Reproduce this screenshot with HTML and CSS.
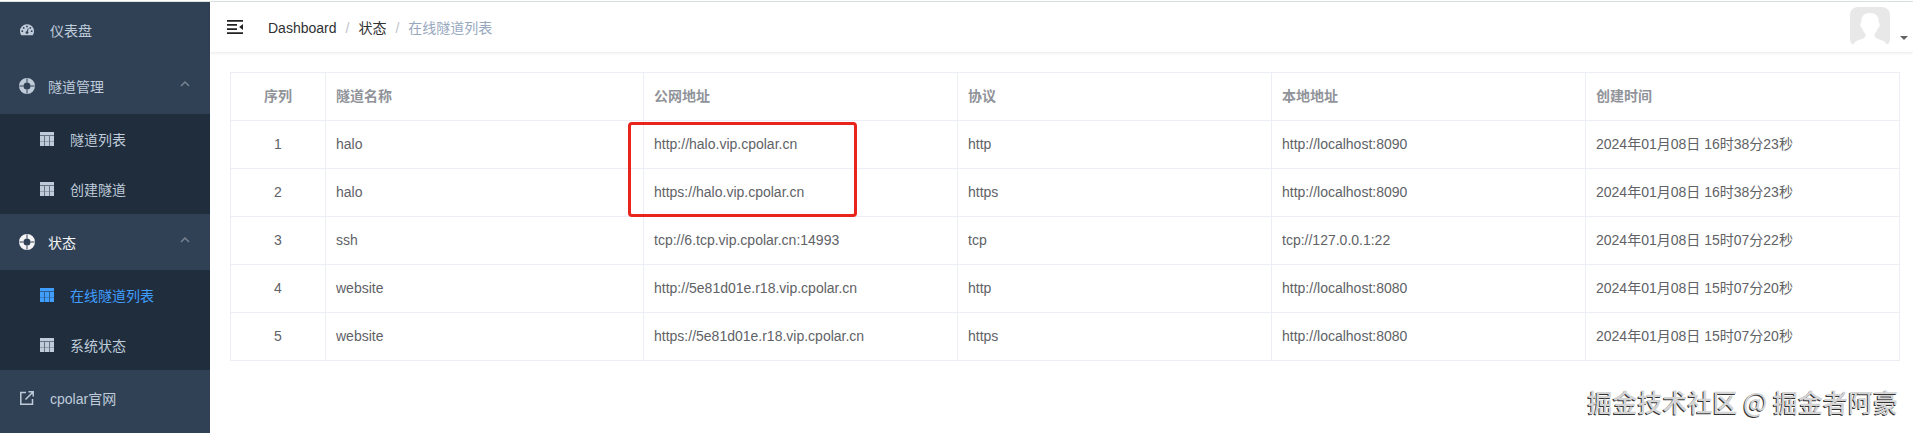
FILE: index.html
```
<!DOCTYPE html>
<html lang="zh-CN">
<head>
    <meta charset="UTF-8">
    <meta name="viewport" content="width=device-width, initial-scale=1.0">
    <title>在线隧道列表</title>
    <link rel="stylesheet" href="styles.css">
</head>
<body>
    <svg class="sprite" aria-hidden="true">
        <symbol id="icon-table" viewBox="0 0 14 14">
            <path opacity=".45" d="M0 0h14v14H0z"/>
            <path d="M0 0h14v3H0zM0 4h4v5H0zM5 4h4v5H5zM10 4h4v5h-4zM0 9.500h4V14H0zM5 9.500h4V14H5zM10 9.500h4V14h-4z"/>
        </symbol>
        <symbol id="icon-ring" viewBox="0 0 16 16">
            <path fill-rule="evenodd" d="M8 0a8 8 0 1 1 0 16A8 8 0 0 1 8 0zm0 4.500a3.500 3.500 0 1 0 0 7 3.500 3.500 0 0 0 0-7z"/>
            <path class="cut" d="M8 .5v4M8 11.500v4M.5 8h4M11.500 8h4"/>
        </symbol>
        <symbol id="icon-arrow" viewBox="0 0 10 6">
            <path class="line" d="M1 5l4-4 4 4"/>
        </symbol>
    </svg>
    <div class="app">
        <aside class="sidebar">
            <nav class="menu">
                <a href="#" class="item">
                    <svg class="icon" viewBox="0 0 14 14">
                        <path d="M7 1.200a7 7 0 0 0-7 7c0 1.400.4 2.700 1.100 3.800.1.200.3.300.5.300h10.800c.2 0 .4-.1.500-.3A7 7 0 0 0 7 1.200z"/>
                        <g class="dots">
                            <circle cx="2.300" cy="8.200" r=".9"/>
                            <circle cx="3.700" cy="4.900" r=".9"/>
                            <circle cx="7" cy="3.400" r=".9"/>
                            <circle cx="10.300" cy="4.900" r=".9"/>
                            <circle cx="11.700" cy="8.200" r=".9"/>
                            <circle cx="7" cy="9.600" r="1.400"/>
                        </g>
                        <path class="cut" d="M7 9.500l1.200-4"/>
                    </svg>
                    <span>仪表盘</span>
                </a>
                <button class="item group">
                    <svg class="icon ring"><use href="#icon-ring"/></svg>
                    <span>隧道管理</span>
                    <svg class="arrow"><use href="#icon-arrow"/></svg>
                </button>
                <div class="submenu">
                    <a href="#" class="item sub"><svg class="icon"><use href="#icon-table"/></svg><span>隧道列表</span></a>
                    <a href="#" class="item sub"><svg class="icon"><use href="#icon-table"/></svg><span>创建隧道</span></a>
                </div>
                <button class="item group open">
                    <svg class="icon ring"><use href="#icon-ring"/></svg>
                    <span>状态</span>
                    <svg class="arrow"><use href="#icon-arrow"/></svg>
                </button>
                <div class="submenu">
                    <a href="#" class="item sub active"><svg class="icon"><use href="#icon-table"/></svg><span>在线隧道列表</span></a>
                    <a href="#" class="item sub"><svg class="icon"><use href="#icon-table"/></svg><span>系统状态</span></a>
                </div>
                <a href="#" class="item">
                    <svg class="icon" viewBox="0 0 14 14">
                        <path class="line" d="M6 1.500H.8v11.700h11.700V8M5.500 8.500l7-7M8.500.8h4.700v4.700"/>
                    </svg>
                    <span>cpolar官网</span>
                </a>
            </nav>
        </aside>

        <main class="main">
            <header class="navbar">
                <button class="hamburger" aria-label="收起菜单">
                    <svg viewBox="0 0 16 14">
                        <path d="M0 0h16v1.700H0zM0 4h10v1.700H0zM0 8.300h10V10H0zM0 12.300h16V14H0zM16 4v6l-3.800-3z"/>
                    </svg>
                </button>
                <nav class="breadcrumb">
                    <a href="#">Dashboard</a>
                    <span class="sep">/</span>
                    <a href="#">状态</a>
                    <span class="sep">/</span>
                    <span class="current">在线隧道列表</span>
                </nav>
                <button class="avatar" aria-label="用户">
                    <svg class="photo" viewBox="0 0 40 40">
                        <rect width="40" height="40" rx="8" fill="#e8e8e8"/>
                        <path fill="#fff" d="M20 6c6.500 0 9 4 8.700 9.500.9.400 1.300 1.700.9 3.300-.4 1.700-1.200 2.500-2 2.700-.6 2.500-1.600 4-3.100 5.500v2.500c1.500 2.500 6.500 3 9 4.500 1.500.9 2.500 2 3 3.500V40h-33v-2.500c.5-1.500 1.500-2.600 3-3.500 2.500-1.500 7.500-2 9-4.500V27c-1.500-1.500-2.500-3-3.100-5.500-.8-.2-1.600-1-2-2.700-.4-1.600 0-2.900.9-3.300C11 10 13.500 6 20 6z"/>
                        <path fill="#fff" d="M0 37h40v3H0z"/>
                    </svg>
                    <svg class="caret" viewBox="0 0 8 4"><path d="M0 0h8L4 4z"/></svg>
                </button>
            </header>

            <section class="content">
                <table class="tunnels">
                    <colgroup>
                        <col class="col-index">
                        <col class="col-name">
                        <col>
                        <col>
                        <col>
                        <col>
                    </colgroup>
                    <thead>
                        <tr><th>序列</th><th>隧道名称</th><th>公网地址</th><th>协议</th><th>本地地址</th><th>创建时间</th></tr>
                    </thead>
                    <tbody>
                        <tr><td>1</td><td>halo</td><td class="marked">http://halo.vip.cpolar.cn</td><td>http</td><td>http://localhost:8090</td><td>2024年01月08日 16时38分23秒</td></tr>
                        <tr><td>2</td><td>halo</td><td>https://halo.vip.cpolar.cn</td><td>https</td><td>http://localhost:8090</td><td>2024年01月08日 16时38分23秒</td></tr>
                        <tr><td>3</td><td>ssh</td><td>tcp://6.tcp.vip.cpolar.cn:14993</td><td>tcp</td><td>tcp://127.0.0.1:22</td><td>2024年01月08日 15时07分22秒</td></tr>
                        <tr><td>4</td><td>website</td><td>http://5e81d01e.r18.vip.cpolar.cn</td><td>http</td><td>http://localhost:8080</td><td>2024年01月08日 15时07分20秒</td></tr>
                        <tr><td>5</td><td>website</td><td>https://5e81d01e.r18.vip.cpolar.cn</td><td>https</td><td>http://localhost:8080</td><td>2024年01月08日 15时07分20秒</td></tr>
                    </tbody>
                </table>
            </section>
        </main>
    </div>
    <div class="watermark">掘金技术社区 @ 掘金者阿豪</div>
</body>
</html>
```

FILE: styles.css
```
*, *::after {
    box-sizing: border-box;
}
body {
    margin: 0;
    font-family: "Liberation Sans", "Noto Sans CJK SC", sans-serif;
    font-size: 14px;
    background-color: #fff;
    color: #606266;
}
a {
    color: inherit;
    text-decoration: none;
}
button {
    border: 0;
    padding: 0;
    background: none;
    font: inherit;
    color: inherit;
    cursor: pointer;
}
svg {
    display: block;
    fill: currentColor;
}
.sprite {
    position: absolute;
    width: 0;
    height: 0;
}
.line {
    fill: none;
    stroke: currentColor;
    stroke-width: 1.5;
}
.cut {
    fill: none;
    stroke: #304156;
    stroke-width: 1;
}
.dots {
    fill: #304156;
}
.app {
    display: flex;
    min-height: 100vh;
    padding-top: 1px;
}

/* sidebar */
.sidebar {
    width: 210px;
    flex-shrink: 0;
    border-top: 1px solid #dce3e0;
    background-color: #304156;
    color: #bfcbd9;
}
.item {
    display: flex;
    align-items: center;
    width: 100%;
    height: 56px;
    padding: 0 20px;
    gap: 16px;
    text-align: left;
}
.icon {
    width: 14px;
    height: 14px;
    flex-shrink: 0;
}
.ring {
    width: 16px;
    height: 16px;
}
.group {
    padding-left: 19px;
    gap: 13px;
}
.open {
    color: #f4f4f5;
}
.arrow {
    width: 10px;
    height: 6px;
    margin-left: auto;
    margin-bottom: 4px;
    color: #76808e;
}
.arrow .line {
    stroke-width: 1;
}
.submenu {
    background-color: #1f2d3d;
}
.sub {
    height: 50px;
    padding-left: 40px;
}
.active {
    color: #409eff;
}

/* top bar */
.main {
    flex: 1;
    min-width: 0;
    border-top: 1px solid #dce3e0;
}
.navbar {
    display: flex;
    align-items: center;
    height: 50px;
    padding: 0 5px 0 17px;
    box-shadow: 0 1px 3px rgba(0, 21, 41, 0.1);
}
.hamburger {
    color: #222;
}
.hamburger svg {
    width: 16px;
    height: 14px;
}
.breadcrumb {
    display: flex;
    align-items: baseline;
    gap: 9px;
    margin-left: 25px;
    color: #303133;
}
.sep {
    color: #c0c4cc;
}
.current {
    color: #97a8be;
}
.avatar {
    display: flex;
    align-items: flex-end;
    gap: 10px;
    margin-left: auto;
}
.photo {
    width: 40px;
    height: 40px;
}
.caret {
    width: 8px;
    height: 4px;
    margin-bottom: 7px;
}

/* tunnel table */
.content {
    padding: 20px 13px 20px 20px;
}
.tunnels {
    width: 100%;
    table-layout: fixed;
    border-spacing: 0;
    border-top: 1px solid #ebeef5;
    border-left: 1px solid #ebeef5;
}
.col-index {
    width: 95px;
}
.col-name {
    width: 318px;
}
.tunnels th, .tunnels td {
    height: 48px;
    padding: 0 10px;
    border-right: 1px solid #ebeef5;
    border-bottom: 1px solid #ebeef5;
    text-align: left;
    line-height: 23px;
}
.tunnels th {
    color: #909399;
    font-weight: bold;
}
.tunnels th:first-child, .tunnels td:first-child {
    text-align: center;
}
.marked {
    position: relative;
}
.marked::after {
    content: "";
    position: absolute;
    top: 1px;
    left: -16px;
    width: 229px;
    height: 95px;
    border: 3px solid #e8241c;
    border-radius: 4px;
}

.watermark {
    position: absolute;
    right: 15px;
    bottom: 14px;
    font-family: "Noto Sans CJK SC", sans-serif;
    font-size: 25px;
    font-weight: 500;
    line-height: 36px;
    color: #d4d4d4;
    text-shadow: -1px 1px 0 #333;
}
```
